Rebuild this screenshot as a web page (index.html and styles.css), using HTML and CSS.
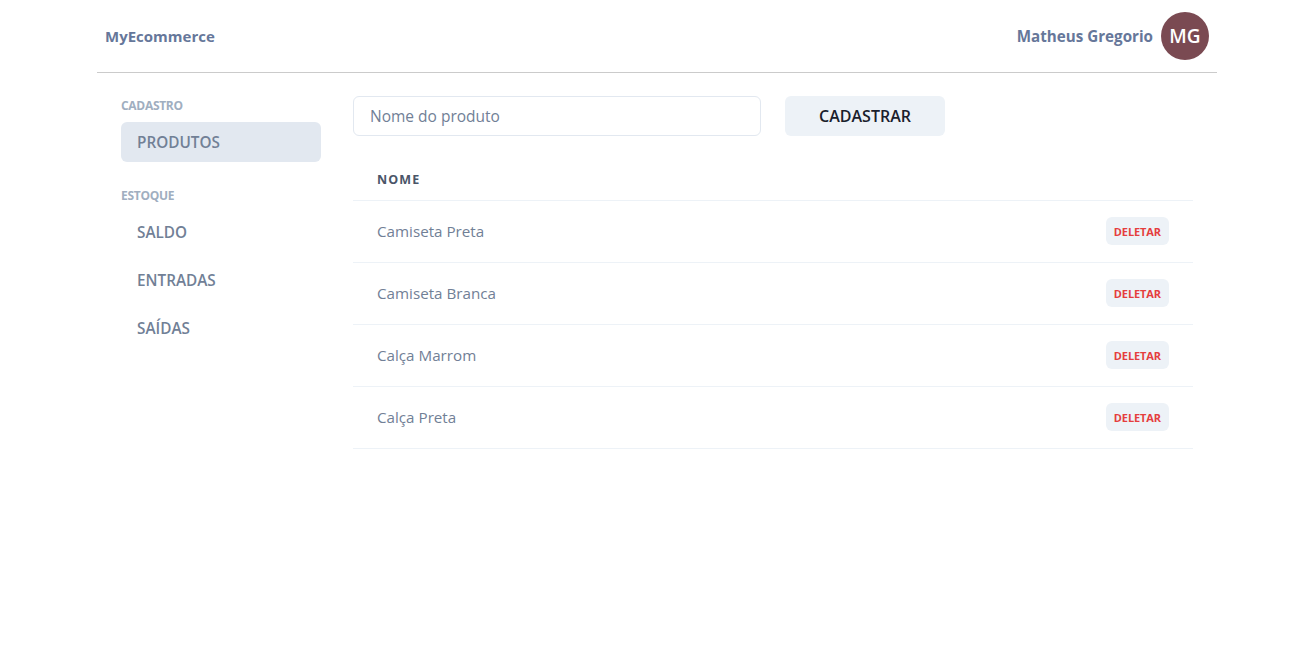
FILE: index.html
```html
<!DOCTYPE html>
<html lang="pt-BR">
<head>
<meta charset="utf-8">
<title>MyEcommerce</title>
<link rel="stylesheet" href="styles.css">
</head>
<body>
<div class="page">
  <header class="header">
    <span class="logo">MyEcommerce</span>
    <div class="user">
      <span class="user-name">Matheus Gregorio</span>
      <span class="avatar">MG</span>
    </div>
  </header>
  <div class="content">
    <nav class="sidebar">
      <div class="nav-label">CADASTRO</div>
      <div class="nav-group">
        <a class="nav-item active">PRODUTOS</a>
      </div>
      <div class="nav-label second">ESTOQUE</div>
      <div class="nav-group">
        <a class="nav-item">SALDO</a>
        <a class="nav-item">ENTRADAS</a>
        <a class="nav-item">SAÍDAS</a>
      </div>
    </nav>
    <main class="main">
      <div class="form-row">
        <input class="input" type="text" placeholder="Nome do produto">
        <button class="btn">CADASTRAR</button>
      </div>
      <table class="table">
        <thead>
          <tr><th>NOME</th><th></th></tr>
        </thead>
        <tbody>
          <tr><td>Camiseta Preta</td><td class="actions"><button class="btn-del">DELETAR</button></td></tr>
          <tr><td>Camiseta Branca</td><td class="actions"><button class="btn-del">DELETAR</button></td></tr>
          <tr><td>Calça Marrom</td><td class="actions"><button class="btn-del">DELETAR</button></td></tr>
          <tr><td>Calça Preta</td><td class="actions"><button class="btn-del">DELETAR</button></td></tr>
        </tbody>
      </table>
    </main>
  </div>
</div>
</body>
</html>
```
FILE: styles.css
```css
* { box-sizing: border-box; }
html, body { margin: 0; padding: 0; background: #fff; }
body {
  font-family: "Open Sans", "Noto Sans", sans-serif;
  color: #1A202C;
}
.page {
  width: 1120px;
  margin-left: 97px;
}
.header {
  height: 73px;
  display: flex;
  align-items: center;
  justify-content: space-between;
  padding: 0 8px;
  border-bottom: 1px solid #CBCBCB;
}
.logo {
  font-weight: 700;
  font-size: 15px;
  color: #66779A;
}
.user { display: flex; align-items: center; gap: 8px; }
.user-name {
  font-weight: 700;
  font-size: 15.2px;
  color: #66779A;
}
.avatar {
  width: 48px; height: 48px;
  border-radius: 50%;
  background: #7A4A52;
  color: #fff;
  display: flex; align-items: center; justify-content: center;
  font-weight: 600;
  font-size: 19px;
}
.content {
  display: flex;
  gap: 32px;
  padding: 23px 24px 0;
}
.sidebar {
  width: 200px;
  flex-shrink: 0;
  display: flex;
  flex-direction: column;
}
.nav-label {
  font-size: 12px;
  font-weight: 700;
  color: #A0AEC0;
  line-height: 16px;
  margin-top: 2px;
  margin-bottom: 8px;
  letter-spacing: -0.3px;
}
.nav-label.second { margin-top: 26px; margin-bottom: 8px; }
.nav-group { display: flex; flex-direction: column; gap: 8px; }
.nav-item {
  height: 40px;
  display: flex;
  align-items: center;
  padding: 0 16px;
  border-radius: 6px;
  font-size: 15.3px;
  font-weight: 600;
  color: #718096;
}
.nav-item.active { background: #E2E8F0; }
.main { flex: 1; display: flex; flex-direction: column; }
.form-row { display: flex; gap: 24px; }
.input {
  width: 408px;
  height: 40px;
  border: 1px solid #E2E8F0;
  border-radius: 6px;
  padding: 0 16px;
  font-family: inherit;
  font-size: 15.5px;
  color: #1A202C;
  outline: none;
}
.input::placeholder { color: #718096; opacity: 1; }
.btn {
  width: 160px;
  height: 40px;
  border: none;
  border-radius: 6px;
  background: #EDF2F7;
  font-family: inherit;
  font-size: 16px;
  font-weight: 600;
  color: #1A202C;
}
.table {
  width: 840px;
  border-collapse: collapse;
  margin-top: 24px;
}
.table th {
  text-align: left;
  font-size: 12.5px;
  font-weight: 700;
  letter-spacing: 1.1px;
  color: #4A5568;
  padding: 0 24px;
  height: 40px;
  border-bottom: 1px solid #EDF2F7;
}
.table td {
  height: 62px;
  padding: 0 24px;
  font-size: 15.2px;
  color: #718096;
  border-bottom: 1px solid #EDF2F7;
}
.table td.actions { text-align: right; }
.btn-del {
  height: 28px;
  padding: 0 8px;
  border: none;
  border-radius: 6px;
  background: #EDF2F7;
  color: #E53E3E;
  font-family: inherit;
  font-size: 11px;
  font-weight: 700;
  letter-spacing: -0.1px;
}
```
